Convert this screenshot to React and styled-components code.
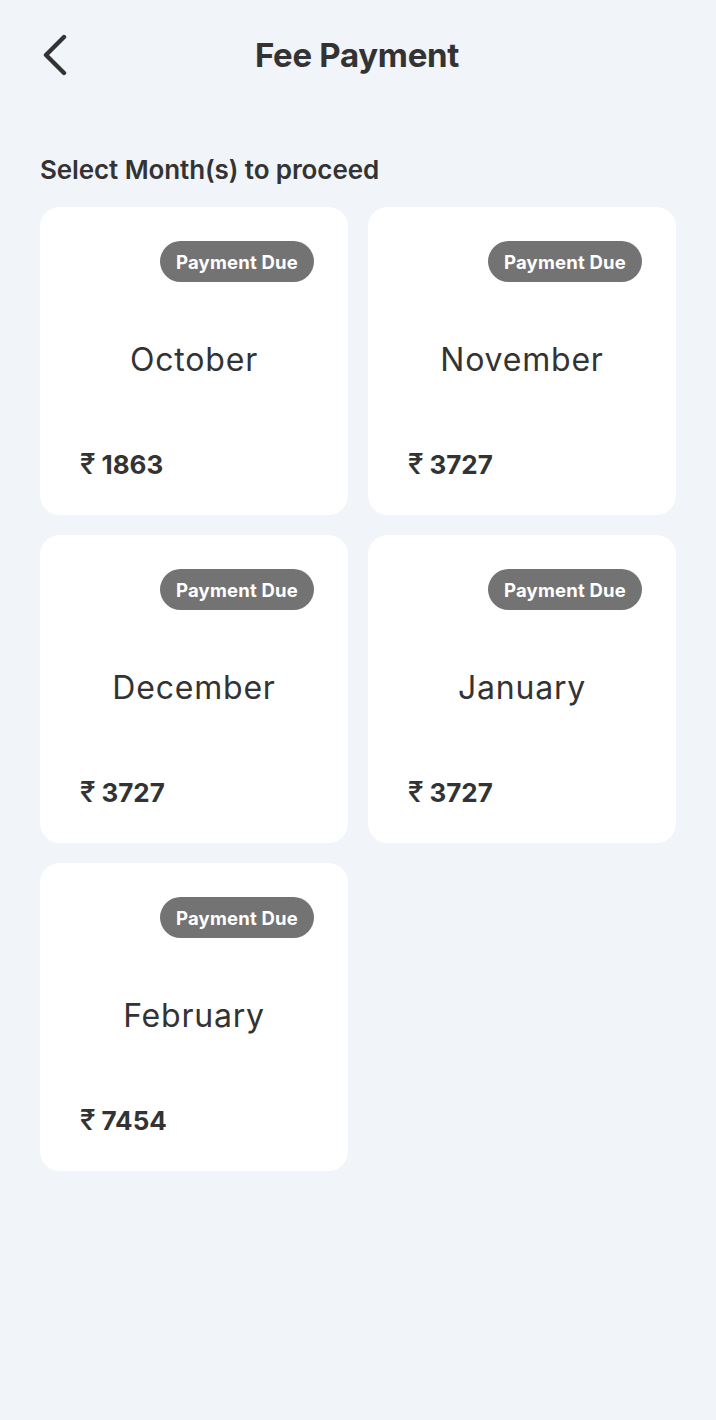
import React from "react";
import styled, { createGlobalStyle } from "styled-components";

const GlobalStyle = createGlobalStyle`
    body {
        margin: 0;
        background: #f1f4f9;
        font-family: Inter, "Noto Sans", sans-serif;
        color: #333333;
    }
`;

const months = [
    { name: "October", amount: 1863 },
    { name: "November", amount: 3727 },
    { name: "December", amount: 3727 },
    { name: "January", amount: 3727 },
    { name: "February", amount: 7454 },
];

export default function App() {
    return (
        <Page>
            <GlobalStyle />
            <Header>
                <BackButton aria-label="Back">
                    <svg width="28" height="42" viewBox="0 0 28 42" fill="none">
                        <polyline
                            points="24,3 6,21 24,39"
                            stroke="#333333"
                            strokeWidth="4.4"
                            strokeLinecap="round"
                            strokeLinejoin="round"
                        />
                    </svg>
                </BackButton>
                <Title>Fee Payment</Title>
            </Header>

            <Label>Select Month(s) to proceed</Label>

            <Grid>
                {months.map((m) => (
                    <Card key={m.name}>
                        <Badge>Payment Due</Badge>
                        <Month>{m.name}</Month>
                        <Amount>
                            <Rupee>₹</Rupee>
                            {m.amount}
                        </Amount>
                    </Card>
                ))}
            </Grid>
        </Page>
    );
}

const Page = styled.div`
    min-height: 1420px;
    padding: 0 40px;
    box-sizing: border-box;
`;

const Header = styled.div`
    position: relative;
    height: 110px;
    display: flex;
    align-items: center;
    justify-content: center;
`;

const BackButton = styled.button`
    position: absolute;
    left: 0;
    top: 34px;
    padding: 0;
    border: 0;
    background: none;
    display: flex;
    cursor: pointer;
`;

const Title = styled.h1`
    margin: 0 0 0 -2px;
    font-size: 33px;
    font-weight: 700;
    line-height: 40px;
    color: #333333;
    letter-spacing: -0.3px;
`;

const Label = styled.h2`
    margin: 44px 0 21px;
    font-size: 26px;
    font-weight: 600;
    line-height: 32px;
    color: #333333;
    letter-spacing: -0.1px;
`;

const Grid = styled.div`
    display: grid;
    grid-template-columns: repeat(2, 308px);
    gap: 20px;
`;

const Card = styled.div`
    height: 308px;
    box-sizing: border-box;
    background: #ffffff;
    border-radius: 20px;
    padding: 34px 34px 35px 40px;
    display: flex;
    flex-direction: column;
`;

const Badge = styled.span`
    align-self: flex-end;
    height: 41px;
    padding: 0 16px;
    border-radius: 21px;
    background: #737373;
    color: #ffffff;
    font-size: 18.5px;
    font-weight: 700;
    display: flex;
    align-items: center;
    letter-spacing: 0.2px;
`;

const Month = styled.div`
    margin-top: 59px;
    margin-left: -6px;
    text-align: center;
    font-size: 32px;
    font-weight: 400;
    line-height: 38px;
    letter-spacing: 0.8px;
    color: #333333;
`;

const Amount = styled.div`
    margin-top: auto;
    font-size: 26px;
    font-weight: 700;
    line-height: 31px;
    color: #333333;
    display: flex;
    align-items: center;
`;

const Rupee = styled.span`
    font-size: 28px;
    font-weight: 500;
    margin-right: 6px;
`;
